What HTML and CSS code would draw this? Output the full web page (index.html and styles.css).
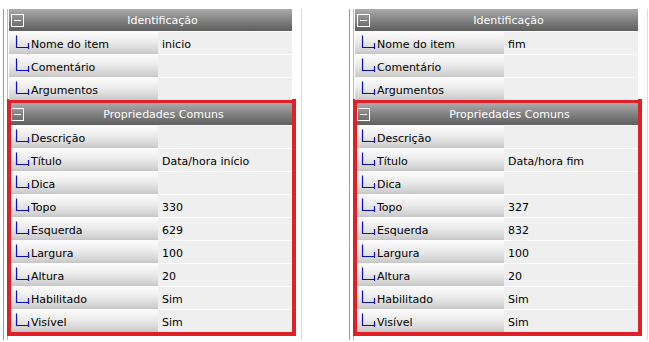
FILE: index.html
```html
<!DOCTYPE html>
<html lang="pt">
<head>
<meta charset="utf-8">
<title>Propriedades</title>
<link rel="stylesheet" href="styles.css">
</head>
<body>
<div class="page">
  <div class="panel">
    <div class="panel-inner">
      <section class="group">
        <div class="ghead"><span class="toggle"></span><span class="gtitle">Identificação</span></div>
        <div class="row"><div class="label"><svg class="tree" viewBox="0 0 16 22"><path d="M1.5 3.5V15.5H13.5M13.5 11V17"/></svg>Nome do item</div><div class="value">inicio</div></div>
        <div class="row"><div class="label"><svg class="tree" viewBox="0 0 16 22"><path d="M1.5 3.5V15.5H13.5M13.5 11V17"/></svg>Comentário</div><div class="value"></div></div>
        <div class="row"><div class="label"><svg class="tree" viewBox="0 0 16 22"><path d="M1.5 3.5V15.5H13.5M13.5 11V17"/></svg>Argumentos</div><div class="value"></div></div>
      </section>
      <section class="group common">
        <div class="ghead"><span class="toggle"></span><span class="gtitle">Propriedades Comuns</span></div>
        <div class="row"><div class="label"><svg class="tree" viewBox="0 0 16 22"><path d="M1.5 3.5V15.5H13.5M13.5 11V17"/></svg>Descrição</div><div class="value"></div></div>
        <div class="row"><div class="label"><svg class="tree" viewBox="0 0 16 22"><path d="M1.5 3.5V15.5H13.5M13.5 11V17"/></svg>Título</div><div class="value">Data/hora início</div></div>
        <div class="row"><div class="label"><svg class="tree" viewBox="0 0 16 22"><path d="M1.5 3.5V15.5H13.5M13.5 11V17"/></svg>Dica</div><div class="value"></div></div>
        <div class="row"><div class="label"><svg class="tree" viewBox="0 0 16 22"><path d="M1.5 3.5V15.5H13.5M13.5 11V17"/></svg>Topo</div><div class="value">330</div></div>
        <div class="row"><div class="label"><svg class="tree" viewBox="0 0 16 22"><path d="M1.5 3.5V15.5H13.5M13.5 11V17"/></svg>Esquerda</div><div class="value">629</div></div>
        <div class="row"><div class="label"><svg class="tree" viewBox="0 0 16 22"><path d="M1.5 3.5V15.5H13.5M13.5 11V17"/></svg>Largura</div><div class="value">100</div></div>
        <div class="row"><div class="label"><svg class="tree" viewBox="0 0 16 22"><path d="M1.5 3.5V15.5H13.5M13.5 11V17"/></svg>Altura</div><div class="value">20</div></div>
        <div class="row"><div class="label"><svg class="tree" viewBox="0 0 16 22"><path d="M1.5 3.5V15.5H13.5M13.5 11V17"/></svg>Habilitado</div><div class="value">Sim</div></div>
        <div class="row"><div class="label"><svg class="tree" viewBox="0 0 16 22"><path d="M1.5 3.5V15.5H13.5M13.5 11V17"/></svg>Visível</div><div class="value">Sim</div></div>
      </section>
    </div>
  </div>
  <div class="panel">
    <div class="panel-inner">
      <section class="group">
        <div class="ghead"><span class="toggle"></span><span class="gtitle">Identificação</span></div>
        <div class="row"><div class="label"><svg class="tree" viewBox="0 0 16 22"><path d="M1.5 3.5V15.5H13.5M13.5 11V17"/></svg>Nome do item</div><div class="value">fim</div></div>
        <div class="row"><div class="label"><svg class="tree" viewBox="0 0 16 22"><path d="M1.5 3.5V15.5H13.5M13.5 11V17"/></svg>Comentário</div><div class="value"></div></div>
        <div class="row"><div class="label"><svg class="tree" viewBox="0 0 16 22"><path d="M1.5 3.5V15.5H13.5M13.5 11V17"/></svg>Argumentos</div><div class="value"></div></div>
      </section>
      <section class="group common">
        <div class="ghead"><span class="toggle"></span><span class="gtitle">Propriedades Comuns</span></div>
        <div class="row"><div class="label"><svg class="tree" viewBox="0 0 16 22"><path d="M1.5 3.5V15.5H13.5M13.5 11V17"/></svg>Descrição</div><div class="value"></div></div>
        <div class="row"><div class="label"><svg class="tree" viewBox="0 0 16 22"><path d="M1.5 3.5V15.5H13.5M13.5 11V17"/></svg>Título</div><div class="value">Data/hora fim</div></div>
        <div class="row"><div class="label"><svg class="tree" viewBox="0 0 16 22"><path d="M1.5 3.5V15.5H13.5M13.5 11V17"/></svg>Dica</div><div class="value"></div></div>
        <div class="row"><div class="label"><svg class="tree" viewBox="0 0 16 22"><path d="M1.5 3.5V15.5H13.5M13.5 11V17"/></svg>Topo</div><div class="value">327</div></div>
        <div class="row"><div class="label"><svg class="tree" viewBox="0 0 16 22"><path d="M1.5 3.5V15.5H13.5M13.5 11V17"/></svg>Esquerda</div><div class="value">832</div></div>
        <div class="row"><div class="label"><svg class="tree" viewBox="0 0 16 22"><path d="M1.5 3.5V15.5H13.5M13.5 11V17"/></svg>Largura</div><div class="value">100</div></div>
        <div class="row"><div class="label"><svg class="tree" viewBox="0 0 16 22"><path d="M1.5 3.5V15.5H13.5M13.5 11V17"/></svg>Altura</div><div class="value">20</div></div>
        <div class="row"><div class="label"><svg class="tree" viewBox="0 0 16 22"><path d="M1.5 3.5V15.5H13.5M13.5 11V17"/></svg>Habilitado</div><div class="value">Sim</div></div>
        <div class="row"><div class="label"><svg class="tree" viewBox="0 0 16 22"><path d="M1.5 3.5V15.5H13.5M13.5 11V17"/></svg>Visível</div><div class="value">Sim</div></div>
      </section>
    </div>
  </div>
</div>
</body>
</html>
```

FILE: styles.css
```css
* { box-sizing: border-box; }
html, body { margin: 0; padding: 0; background: #fff; }
body {
  font-family: "DejaVu Sans", Verdana, sans-serif;
  font-size: 11px;
  color: #000;
}
.page {
  display: flex;
  gap: 47px;
  padding: 9px 0 0 3px;
  height: 342px;
}
.panel {
  width: 299px;
  height: 331px;
  border-left: 1px solid #9c9c9c;
  border-right: 1px solid #dcdcdc;
  padding-left: 3px;
}
.panel-inner {
  width: 285px;
  height: 100%;
  border-left: 1px solid #bdbdbd;
  padding-left: 1px;
}
.group { display: flex; flex-direction: column; }
.ghead {
  height: 22px;
  display: flex;
  align-items: center;
  background: linear-gradient(#ababab, #7e7e7e 55%, #5f5f5f);
  color: #fff;
  position: relative;
}
.toggle {
  position: absolute;
  left: 2px;
  top: 5px;
  width: 13px;
  height: 13px;
  border: 1px solid #fff;
}
.toggle::after {
  content: "";
  position: absolute;
  left: 2px;
  right: 2px;
  top: 5px;
  height: 1px;
  background: #fff;
}
.gtitle {
  flex: 1;
  text-align: center;
  padding-left: 24px;
}
.row {
  display: grid;
  grid-template-columns: 149px 1fr;
  height: 23px;
  border-top: 1px solid #fbfbfb;
}
.label {
  display: flex;
  align-items: center;
  padding: 3px 0 0 6px;
  background: linear-gradient(#fcfcfc, #ebebeb 45%, #d3d3d3 85%, #c6c6c6);
  white-space: nowrap;
}
.label .tree { margin-top: -3px; }
.value {
  display: flex;
  align-items: center;
  padding: 3px 0 0 4px;
  background: #efefef;
  white-space: nowrap;
}
.tree {
  width: 16px;
  height: 22px;
  flex: none;
}
.tree path {
  fill: none;
  stroke: #0c0cc0;
  stroke-width: 1.2;
}
.common {
  margin: -1px -4px 0 -2px;
  border: 4px solid #e11f27;
}
.common .row { grid-template-columns: 147px 1fr; }
.common .label { padding-left: 4px; }
.common .toggle { left: 0; }
```
